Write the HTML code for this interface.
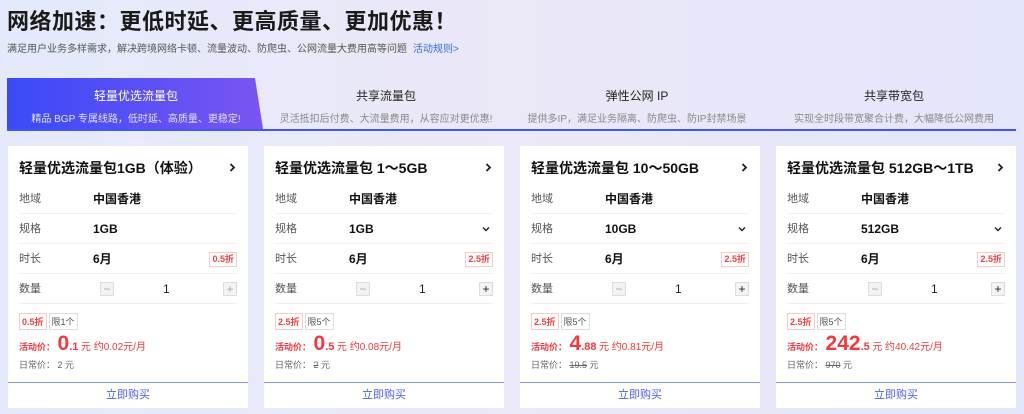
<!DOCTYPE html>
<html><head><meta charset="utf-8"><style>
*{margin:0;padding:0;box-sizing:border-box}
body{width:1024px;height:414px;overflow:hidden;font-family:"Liberation Sans","Noto Sans CJK SC",sans-serif;background:linear-gradient(90deg,#e4eafb 0%,#ebe8f8 50%,#e4e6fb 100%);position:relative;color:#222}
h1{position:absolute;left:7px;top:4px;font-size:22px;font-weight:bold;color:#1a1a1a;letter-spacing:0.5px}
.sub{position:absolute;left:7px;top:40px;font-size:10px;color:#555}
.sub a{color:#2f6ef0;margin-left:6px;text-decoration:none}
.tabs{position:absolute;left:7px;top:78px;width:1009px;height:53px;border-bottom:2px solid #3f57f6}
.tab{position:absolute;top:0;height:51px;text-align:center}
.tab b{display:block;font-size:12px;font-weight:normal;margin-top:9px;color:#222}
.tab span{display:block;font-size:10px;color:#888;margin-top:6px}
.t1{left:0;width:258px;background:linear-gradient(90deg,#3a4af8,#7a55f2);clip-path:polygon(0 0,248px 0,256px 100%,0 100%)}
.t1 b{color:#fff}.t1 span{color:#e0e0ff}
.card{position:absolute;top:146px;width:240px;height:262px;background:#fff}
.title{position:absolute;left:11px;top:12px;font-size:14px;font-weight:bold;color:#111}
.arr{position:absolute;right:12px;top:17px}
.row{position:absolute;left:11px;right:11px;height:30px;border-bottom:1px solid #eef0f3;font-size:11px;line-height:30px}
.row .l{position:absolute;left:0;top:0;color:#555}
.row .v{position:absolute;left:74px;top:0;font-weight:bold;color:#111;font-size:12px}
.disc{position:absolute;right:0;top:8px;font-size:9px;line-height:11px;color:#f04040;border:1px solid #fbc8c8;padding:1px 2px;font-weight:bold}
.chev{position:absolute;right:3px;top:12px}
.btn{position:absolute;top:8px;width:14px;height:14px;border:1px solid #ddd;background:#f3f3f5;font-size:12px;line-height:12px;text-align:center;color:#aaa}
.qty{position:absolute;left:144px;top:0;font-size:12px}
.tags{position:absolute;left:11px;top:167px;font-size:9px}
.tags span{display:inline-block;border:1px solid #ddd;padding:1px 2px;margin-right:2px;color:#555}
.tags span.r{color:#f04040;border-color:#fbc8c8;font-weight:bold}
.price{position:absolute;left:11px;top:186px;color:#f5383b;font-size:9px;white-space:nowrap}
.price .big{font-size:21px;font-weight:bold}
.price .m{font-size:11px;font-weight:bold}
.price .s{font-size:10px}
.norm{position:absolute;left:11px;top:212px;font-size:9px;color:#666}
.buy{position:absolute;left:0;right:0;bottom:0;height:26px;border-top:1px solid #8a93f5;text-align:center;font-size:11px;color:#4b5ff2;line-height:24px}
</style></head><body>
<h1>网络加速：更低时延、更高质量、更加优惠！</h1>
<div class="sub">满足用户业务多样需求，解决跨境网络卡顿、流量波动、防爬虫、公网流量大费用高等问题<a>活动规则&gt;</a></div>
<div class="tabs">
<div class="tab t1"><b>轻量优选流量包</b><span>精品 BGP 专属线路，低时延、高质量、更稳定!</span></div>
<div class="tab" style="left:258px;width:242px"><b>共享流量包</b><span>灵活抵扣后付费、大流量费用，从容应对更优惠!</span></div>
<div class="tab" style="left:505px;width:250px"><b>弹性公网 IP</b><span>提供多IP，满足业务隔离、防爬虫、防IP封禁场景</span></div>
<div class="tab" style="left:762px;width:250px"><b>共享带宽包</b><span>实现全时段带宽聚合计费，大幅降低公网费用</span></div>
</div>

<div class="card" style="left:8px">
<div class="title">轻量优选流量包1GB（体验）</div><svg class="arr" width="7" height="9" viewBox="0 0 7 9"><path d="M1.5 1l3.5 3.5-3.5 3.5" fill="none" stroke="#222" stroke-width="1.8"/></svg>
<div class="row" style="top:38px"><span class="l">地域</span><span class="v">中国香港</span></div>
<div class="row" style="top:68px"><span class="l">规格</span><span class="v">1GB</span></div>
<div class="row" style="top:98px"><span class="l">时长</span><span class="v">6月</span><span class="disc">0.5折</span></div>
<div class="row" style="top:128px"><span class="l">数量</span><div class="btn" style="left:81px">−</div><span class="qty">1</span><div class="btn" style="right:0">+</div></div>
<div class="tags"><span class="r">0.5折</span><span>限1个</span></div>
<div class="price"><b>活动价：</b> <span class="big">0</span><span class="m">.1</span> <span class="s">元 约0.02元/月</span></div>
<div class="norm">日常价： 2 元</div>
<div class="buy">立即购买</div>
</div>

<div class="card" style="left:264px">
<div class="title">轻量优选流量包 1～5GB</div><svg class="arr" width="7" height="9" viewBox="0 0 7 9"><path d="M1.5 1l3.5 3.5-3.5 3.5" fill="none" stroke="#222" stroke-width="1.8"/></svg>
<div class="row" style="top:38px"><span class="l">地域</span><span class="v">中国香港</span></div>
<div class="row" style="top:68px"><span class="l">规格</span><span class="v">1GB</span><svg class="chev" width="8" height="6" viewBox="0 0 8 6"><path d="M1 1.5l3 3 3-3" fill="none" stroke="#222" stroke-width="1.4"/></svg></div>
<div class="row" style="top:98px"><span class="l">时长</span><span class="v">6月</span><span class="disc">2.5折</span></div>
<div class="row" style="top:128px"><span class="l">数量</span><div class="btn" style="left:81px">−</div><span class="qty">1</span><div class="btn" style="right:0;color:#222">+</div></div>
<div class="tags"><span class="r">2.5折</span><span>限5个</span></div>
<div class="price"><b>活动价：</b> <span class="big">0</span><span class="m">.5</span> <span class="s">元 约0.08元/月</span></div>
<div class="norm">日常价： <s>2</s> 元</div>
<div class="buy">立即购买</div>
</div>

<div class="card" style="left:520px">
<div class="title">轻量优选流量包 10～50GB</div><svg class="arr" width="7" height="9" viewBox="0 0 7 9"><path d="M1.5 1l3.5 3.5-3.5 3.5" fill="none" stroke="#222" stroke-width="1.8"/></svg>
<div class="row" style="top:38px"><span class="l">地域</span><span class="v">中国香港</span></div>
<div class="row" style="top:68px"><span class="l">规格</span><span class="v">10GB</span><svg class="chev" width="8" height="6" viewBox="0 0 8 6"><path d="M1 1.5l3 3 3-3" fill="none" stroke="#222" stroke-width="1.4"/></svg></div>
<div class="row" style="top:98px"><span class="l">时长</span><span class="v">6月</span><span class="disc">2.5折</span></div>
<div class="row" style="top:128px"><span class="l">数量</span><div class="btn" style="left:81px">−</div><span class="qty">1</span><div class="btn" style="right:0;color:#222">+</div></div>
<div class="tags"><span class="r">2.5折</span><span>限5个</span></div>
<div class="price"><b>活动价：</b> <span class="big">4</span><span class="m">.88</span> <span class="s">元 约0.81元/月</span></div>
<div class="norm">日常价： <s>19.5</s> 元</div>
<div class="buy">立即购买</div>
</div>

<div class="card" style="left:776px">
<div class="title">轻量优选流量包 512GB～1TB</div><svg class="arr" width="7" height="9" viewBox="0 0 7 9"><path d="M1.5 1l3.5 3.5-3.5 3.5" fill="none" stroke="#222" stroke-width="1.8"/></svg>
<div class="row" style="top:38px"><span class="l">地域</span><span class="v">中国香港</span></div>
<div class="row" style="top:68px"><span class="l">规格</span><span class="v">512GB</span><svg class="chev" width="8" height="6" viewBox="0 0 8 6"><path d="M1 1.5l3 3 3-3" fill="none" stroke="#222" stroke-width="1.4"/></svg></div>
<div class="row" style="top:98px"><span class="l">时长</span><span class="v">6月</span><span class="disc">2.5折</span></div>
<div class="row" style="top:128px"><span class="l">数量</span><div class="btn" style="left:81px">−</div><span class="qty">1</span><div class="btn" style="right:0;color:#222">+</div></div>
<div class="tags"><span class="r">2.5折</span><span>限5个</span></div>
<div class="price"><b>活动价：</b> <span class="big">242</span><span class="m">.5</span> <span class="s">元 约40.42元/月</span></div>
<div class="norm">日常价： <s>970</s> 元</div>
<div class="buy">立即购买</div>
</div>
</body></html>
